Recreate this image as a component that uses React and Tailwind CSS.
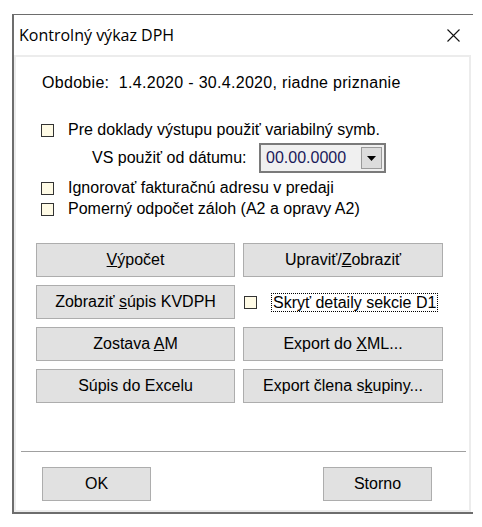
import React from 'react';

const font = { fontFamily: '"Liberation Sans", Arial, sans-serif' };

const Check = () => (
  <span className="inline-block w-[13px] h-[13px] border border-[#333333] bg-[#fffbe6] shrink-0" />
);

const Btn = ({ children, className = '' }) => (
  <button className={`h-[34px] bg-[#e1e1e1] border border-[#adadad] text-[16px] text-black flex items-center justify-center ${className}`}>
    <span>{children}</span>
  </button>
);

const App = () => {
  return (
    <div className="w-[482px] h-[527px] bg-white" style={font}>
      <div className="relative top-[14px] left-[12px] w-[461px] h-[500px] border-t border-l-2 border-b-2 border-[#6d6d6d] flex flex-col">
        <div className="h-[40px] flex items-center justify-between pl-[5px] pr-[13px] shrink-0">
          <span className="text-[16px] text-black" style={{ fontFamily: '"Open Sans", "Noto Sans", sans-serif' }}>Kontrolný výkaz DPH</span>
          <svg width="13" height="13" viewBox="0 0 13 13">
            <path d="M0.5 0.5 L12.5 12.5 M12.5 0.5 L0.5 12.5" stroke="#111" strokeWidth="1.1" />
          </svg>
        </div>
        <div className="flex-1 mr-[2px] border-2 border-[#ececec] flex flex-col text-[16px] text-black">
          <div className="h-[20px] mt-[16px] pl-[26px] flex items-center whitespace-pre tracking-[0.3px]">
            <span>Obdobie:  1.4.2020 - 30.4.2020, riadne priznanie</span>
          </div>
          <div className="h-[20px] mt-[27px] pl-[25px] flex items-center gap-[14px]">
            <Check />
            <span>Pre doklady výstupu použiť variabilný symb.</span>
          </div>
          <div className="h-[30px] mt-[3px] pl-[76px] flex items-center">
            <span className="w-[167px]">VS použiť od dátumu:</span>
            <div className="h-[30px] w-[127px] border-2 border-[#7a7a7a] bg-[#f0f0f0] flex items-center justify-between pl-[5px] pr-[2px]">
              <span className="text-[#1a1a5a]">00.00.0000</span>
              <span className="w-[21px] h-[22px] bg-[#dcdcdc] border border-[#9a9a9a] flex items-center justify-center">
                <svg width="9" height="5" viewBox="0 0 9 5"><path d="M0 0 H9 L4.5 5 Z" fill="#000" /></svg>
              </span>
            </div>
          </div>
          <div className="h-[20px] mt-[5px] pl-[25px] flex items-center gap-[14px]">
            <Check />
            <span>Ignorovať fakturačnú adresu v predaji</span>
          </div>
          <div className="h-[20px] mt-[1px] pl-[25px] flex items-center gap-[14px]">
            <Check />
            <span>Pomerný odpočet záloh (A2 a opravy A2)</span>
          </div>
          <div className="mt-[24px] ml-[20px] grid grid-cols-[199px_200px] gap-x-[8px] gap-y-[8px]">
            <Btn><u>V</u>ýpočet</Btn>
            <Btn>Upraviť/<u>Z</u>obraziť</Btn>
            <Btn>Zobraziť <u>s</u>úpis KVDPH</Btn>
            <div className="h-[34px] flex items-center gap-[14px] pl-[1px]">
              <Check />
              <span className="border border-dotted border-black px-[1px] leading-[17px]">Skryť detaily sekcie D1</span>
            </div>
            <Btn>Zostava <u>A</u>M</Btn>
            <Btn>Export do <u>X</u>ML...</Btn>
            <Btn>Súpis do Excelu</Btn>
            <Btn>Export člena s<u>k</u>upiny...</Btn>
          </div>
          <div className="mt-[48px] ml-[5px] mr-[3px] h-px bg-[#a0a0a0]" />
          <div className="mt-[15px] flex justify-between pl-[26px] pr-[37px]">
            <Btn className="w-[109px] h-[33px]">OK</Btn>
            <Btn className="w-[109px] h-[33px]">Storno</Btn>
          </div>
        </div>
      </div>
    </div>
  );
};

export default App;
